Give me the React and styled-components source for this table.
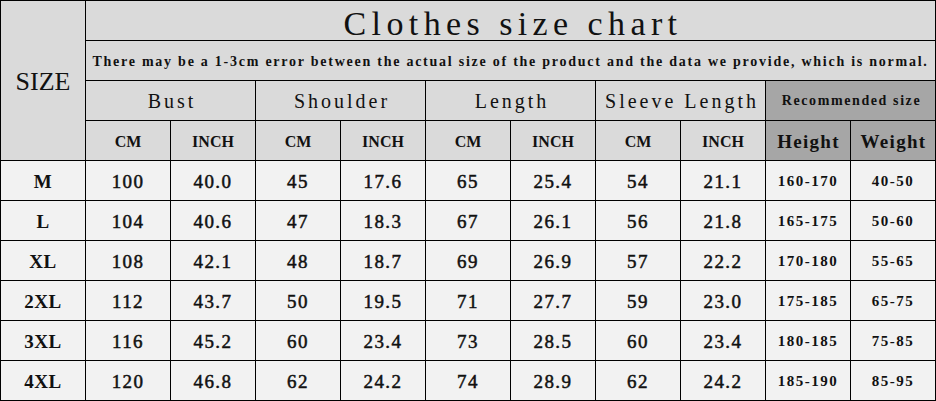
import styled, { createGlobalStyle } from "styled-components";

const GlobalStyle = createGlobalStyle`
  html, body {
    margin: 0;
    padding: 0;
    background: #ffffff;
  }
`;

const Chart = styled.div`
  display: grid;
  grid-template-columns: repeat(11, 84px);
  grid-template-rows: repeat(10, 39px);
  gap: 1px;
  padding: 1px;
  width: 936px;
  height: 401px;
  box-sizing: border-box;
  background: #000;
  font-family: "Liberation Serif", "Times New Roman", serif;
  color: #111;
`;

const Cell = styled.div`
  display: flex;
  align-items: center;
  justify-content: center;
  overflow: hidden;
  white-space: nowrap;
  background: ${(p) => (p.$tone === "dark" ? "#a6a6a6" : p.$tone === "light" ? "#f2f2f2" : "#dadada")};
  grid-column: ${(p) => p.$col || "auto"};
  grid-row: ${(p) => p.$row || "auto"};
`;

const SizeHead = styled(Cell)`
  font-size: 26px;
  padding-top: 2px;
`;

const Title = styled(Cell)`
  font-size: 34px;
  letter-spacing: 5.4px;
  padding-top: 6px;
  padding-left: 5px;
`;

const Note = styled(Cell)`
  font-size: 14px;
  font-weight: bold;
  letter-spacing: 1.75px;
  padding-top: 2px;
`;

const Group = styled(Cell)`
  font-size: 20px;
  letter-spacing: 3px;
  padding-top: 2px;
  padding-left: 3px;
`;

const Recommended = styled(Cell)`
  font-size: 14px;
  font-weight: bold;
  letter-spacing: 1.6px;
  padding-left: 2px;
`;

const Unit = styled(Cell)`
  font-size: 16px;
  font-weight: bold;
  padding-top: 2px;
`;

const UnitWide = styled(Cell)`
  font-size: 19px;
  font-weight: bold;
  letter-spacing: 1.3px;
  padding-top: 2px;
  padding-left: 1px;
`;

const Value = styled(Cell)`
  font-size: 19px;
  font-weight: ${(p) => (p.$bold ? "bold" : "normal")};
  letter-spacing: ${(p) => (p.$bold ? "0.5px" : "1.4px")};
  -webkit-text-stroke: ${(p) => (p.$bold ? "0" : "0.5px #111")};
  padding-top: 2px;
`;

const Range = styled(Cell)`
  font-size: 15px;
  font-weight: bold;
  letter-spacing: 1.5px;
  padding-top: 2px;
`;

const groups = ["Bust", "Shoulder", "Length", "Sleeve Length"];

const rows = [
  ["M", "100", "40.0", "45", "17.6", "65", "25.4", "54", "21.1", "160-170", "40-50"],
  ["L", "104", "40.6", "47", "18.3", "67", "26.1", "56", "21.8", "165-175", "50-60"],
  ["XL", "108", "42.1", "48", "18.7", "69", "26.9", "57", "22.2", "170-180", "55-65"],
  ["2XL", "112", "43.7", "50", "19.5", "71", "27.7", "59", "23.0", "175-185", "65-75"],
  ["3XL", "116", "45.2", "60", "23.4", "73", "28.5", "60", "23.4", "180-185", "75-85"],
  ["4XL", "120", "46.8", "62", "24.2", "74", "28.9", "62", "24.2", "185-190", "85-95"],
];

export default function App() {
  return (
    <>
      <GlobalStyle />
      <Chart>
        <SizeHead $col="1" $row="1 / span 4">SIZE</SizeHead>
        <Title $col="2 / span 10" $row="1">Clothes size chart</Title>
        <Note $col="2 / span 10" $row="2">
          There may be a 1-3cm error between the actual size of the product and the data we provide, which is normal.
        </Note>
        {groups.map((g, i) => (
          <Group key={g} $col={`${2 + i * 2} / span 2`} $row="3">
            {g}
          </Group>
        ))}
        <Recommended $tone="dark" $col="10 / span 2" $row="3">
          Recommended size
        </Recommended>
        {groups.map((g, i) => [
          <Unit key={g + "cm"} $col={`${2 + i * 2}`} $row="4">CM</Unit>,
          <Unit key={g + "in"} $col={`${3 + i * 2}`} $row="4">INCH</Unit>,
        ])}
        <UnitWide $tone="dark" $col="10" $row="4">Height</UnitWide>
        <UnitWide $tone="dark" $col="11" $row="4">Weight</UnitWide>
        {rows.map((r) =>
          r.map((v, j) =>
            j >= 9 ? (
              <Range key={r[0] + j} $tone="light">{v}</Range>
            ) : (
              <Value key={r[0] + j} $tone="light" $bold={j === 0}>
                {v}
              </Value>
            )
          )
        )}
      </Chart>
    </>
  );
}
